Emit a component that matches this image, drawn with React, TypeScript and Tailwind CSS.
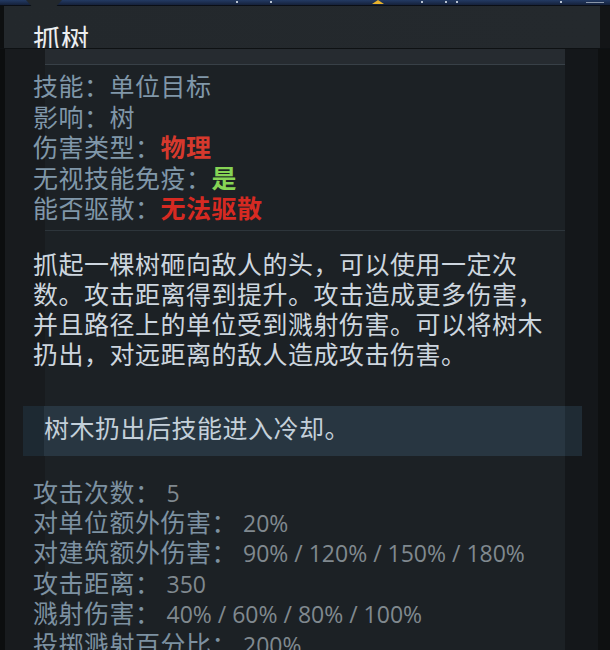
import React from "react";

const Row = ({ children }: { children: React.ReactNode }) => (
  <div className="whitespace-nowrap">{children}</div>
);

const Val = ({ children }: { children: React.ReactNode }) => (
  <span className="text-[23px] leading-[20px] tracking-normal text-[#80898f]">{children}</span>
);

export default function App() {
  return (
    <div className="w-[610px] h-[650px] overflow-hidden relative flex flex-col font-['Open_Sans','Noto_Sans_CJK_SC',sans-serif] bg-[#181b1e]">
      {/* top strip */}
      <div className="h-[5px] shrink-0 bg-[linear-gradient(to_bottom,#233a63,#15213a)]" />
      <div className="h-px shrink-0 bg-[#0a0e15]" />
      {/* decorations on the strip */}
      <div className="absolute left-[26px] top-0 w-[36px] h-[6px] bg-[#23282c] [clip-path:polygon(0_0,100%_0,85%_100%,15%_100%)]" />
      <div className="absolute left-[372px] top-0 w-[12px] h-[4px] bg-[#e8b22c] [clip-path:polygon(50%_0,100%_100%,0_100%)]" />
      <div className="absolute left-[236px] top-[1px] w-[2px] h-[2px] bg-[#b9c3d0]" />
      <div className="absolute left-[270px] top-[1px] w-[2px] h-[2px] bg-[#b9c3d0]" />
      <div className="absolute left-[421px] top-[1px] w-[2px] h-[2px] bg-[#b9c3d0]" />
      <div className="absolute left-[445px] top-[1px] w-[2px] h-[2px] bg-[#b9c3d0]" />
      <div className="absolute left-[456px] top-[1px] w-[2px] h-[2px] bg-[#b9c3d0]" />
      <div className="absolute left-[560px] top-[1px] w-[2px] h-[2px] bg-[#b9c3d0]" />
      <div className="absolute left-[586px] top-[2px] w-[18px] h-px bg-[#8a96a8]" />

      {/* header */}
      <div className="h-[42px] shrink-0 pl-[33px] pt-[18px] bg-[linear-gradient(to_right,#0d0f10_0px,#0d0f10_4px,#23282c_4px,#24292d_600px,#131517_600px)]">
        <div className="text-[28px] leading-[28px] font-normal text-[#eceef0] font-['Noto_Sans_CJK_SC',sans-serif]">
          抓树
        </div>
      </div>
      <div className="h-px shrink-0 bg-[#0e1113]" />

      {/* body */}
      <div className="flex-1 flex flex-col bg-[linear-gradient(to_right,#0c0e0f_0px,#0c0e0f_5px,#181b1e_5px,#181b1e_45px,#1c2125_45px,#1c2125_565px,#14171a_565px,#14171a_598px,#0e1011_598px)]">
        <div className="ml-[45px] w-[520px] h-[16px] shrink-0 bg-[#262b30] border-b border-[#384047]" />

        <div className="mt-[6px] pl-[33px] text-[25px] leading-[30.5px] tracking-[0.5px] text-[#8097a9]">
          <Row>技能：单位目标</Row>
          <Row>影响：树</Row>
          <Row>
            伤害类型：<span className="text-[#d6392d] font-bold">物理</span>
          </Row>
          <Row>
            无视技能免疫：<span className="text-[#86d455] font-bold">是</span>
          </Row>
          <Row>
            能否驱散：<span className="text-[#d62a22] font-bold">无法驱散</span>
          </Row>
        </div>

        <div className="mt-[6px] ml-[45px] w-[520px] h-px shrink-0 bg-[#2d353b]" />

        <div className="mt-[18px] pl-[33px] text-[25px] leading-[30px] tracking-[0.5px] text-[#cdd6df]">
          <Row>抓起一棵树砸向敌人的头，可以使用一定次</Row>
          <Row>数。攻击距离得到提升。攻击造成更多伤害，</Row>
          <Row>并且路径上的单位受到溅射伤害。可以将树木</Row>
          <Row>扔出，对远距离的敌人造成攻击伤害。</Row>
        </div>

        <div className="mt-[37px] ml-[23px] w-[559px] h-[50px] shrink-0 pl-[21px] text-[25px] leading-[44px] tracking-[0.5px] text-[#c4d0da] bg-[linear-gradient(to_right,#1d2932_0px,#1d2932_21px,#283641_21px,#283641_542px,#1f2b34_542px)]">
          树木扔出后技能进入冷却。
        </div>

        <div className="mt-[21px] pl-[33px] text-[25px] leading-[30.4px] tracking-[0.5px] text-[#7d91a1]">
          <Row>
            攻击次数：<Val> 5</Val>
          </Row>
          <Row>
            对单位额外伤害：<Val> 20%</Val>
          </Row>
          <Row>
            对建筑额外伤害：<Val> 90% / 120% / 150% / 180%</Val>
          </Row>
          <Row>
            攻击距离：<Val> 350</Val>
          </Row>
          <Row>
            溅射伤害：<Val> 40% / 60% / 80% / 100%</Val>
          </Row>
          <Row>
            投掷溅射百分比：<Val> 200%</Val>
          </Row>
        </div>
      </div>
    </div>
  );
}
